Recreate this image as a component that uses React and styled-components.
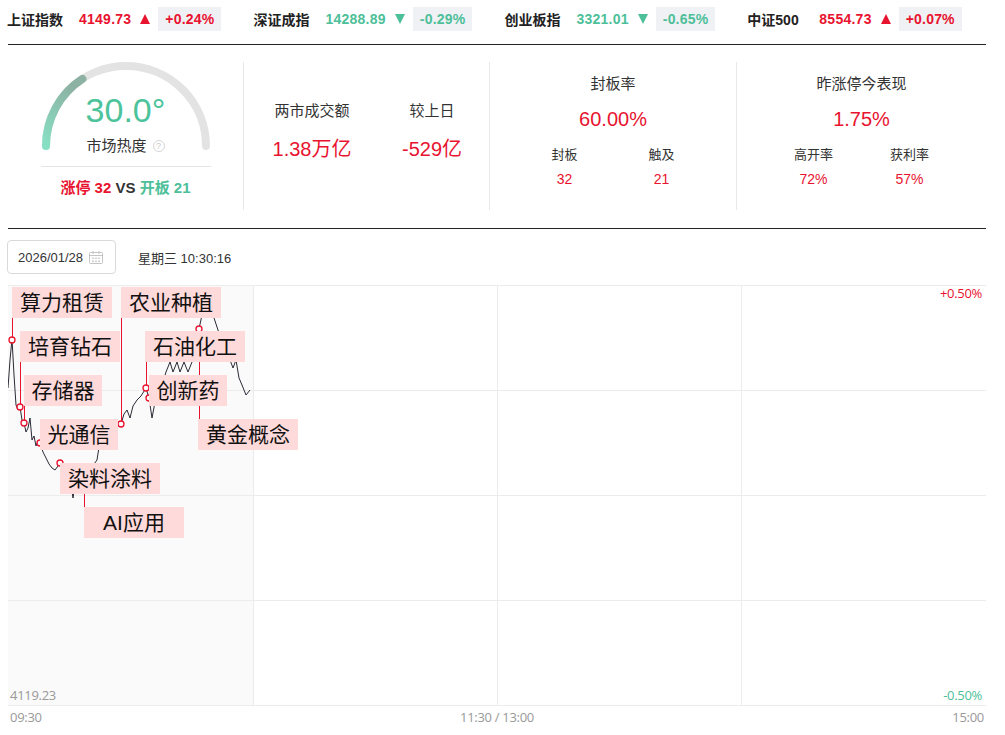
import React from "react";
import styled, { createGlobalStyle } from "styled-components";

const RED = "#e8132f";
const GREEN = "#4dbf99";

const Global = createGlobalStyle`
  html, body { margin: 0; padding: 0; background: #fff; }
  body { font-family: "Liberation Sans", "Noto Sans CJK SC", sans-serif; color: #222; }
  * { box-sizing: border-box; }
`;

const Page = styled.div`
  width: 1005px;
  height: 735px;
  overflow: hidden;
`;

/* ---------- ticker ---------- */
const TickerBar = styled.div`
  height: 38px;
  display: flex;
  align-items: center;
  gap: 32px;
  padding-left: 7px;
`;
const Ticker = styled.div`
  display: flex;
  align-items: center;
  font-size: 14px;
  font-weight: 700;
`;
const TickName = styled.span`
  width: 72px;
  color: #222;
`;
const TickNum = styled.span`
  color: ${(p) => (p.$up ? RED : GREEN)};
  letter-spacing: 0.25px;
`;
const Arrow = styled.span`
  width: 0;
  height: 0;
  margin: 0 8px 0 9px;
  border-left: 5.5px solid transparent;
  border-right: 5.5px solid transparent;
  ${(p) =>
    p.$up
      ? `border-bottom: 10px solid ${RED};`
      : `border-top: 10px solid ${GREEN};`}
`;
const Badge = styled.span`
  height: 24px;
  line-height: 24px;
  padding: 0 7px;
  background: #f0f1f5;
  letter-spacing: 0.2px;
  color: ${(p) => (p.$up ? RED : GREEN)};
`;

/* ---------- stats ---------- */
const Stats = styled.div`
  margin: 6px 0 0 8px;
  width: 978px;
  height: 185px;
  border-top: 1px solid #222;
  border-bottom: 1px solid #222;
  display: grid;
  grid-template-columns: 235px 246px 247px 1fr;
  padding: 17px 0 18px;
`;
const Panel = styled.div`
  display: flex;
  flex-direction: column;
  align-items: center;
  border-left: ${(p) => (p.$first ? "none" : "1px solid #e8e8e8")};
  padding-top: ${(p) => p.$pt || 0}px;
`;
const GaugeWrap = styled.div`
  position: relative;
  width: 176px;
  height: 94px;
  display: flex;
  flex-direction: column;
  align-items: center;
  padding-top: 28px;
  svg { position: absolute; left: 0; top: 0; }
`;
const GaugeValue = styled.div`
  position: relative;
  font-size: 34px;
  line-height: 40px;
  color: #4cc39a;
  font-family: "Liberation Sans", sans-serif;
`;
const GaugeLabel = styled.div`
  position: relative;
  margin-top: 6px;
  font-size: 15px;
  line-height: 20px;
  color: #333;
  display: flex;
  align-items: center;
  gap: 6px;
`;
const Help = styled.span`
  width: 12px;
  height: 12px;
  border: 1px solid #d6d6d6;
  border-radius: 50%;
  font-size: 9px;
  line-height: 10px;
  text-align: center;
  color: #c8c8c8;
`;
const GaugeDivider = styled.div`
  width: 170px;
  margin-top: 10px;
  border-top: 1px solid #e5e5e5;
`;
const VsLine = styled.div`
  margin-top: 11px;
  font-size: 15px;
  line-height: 20px;
  font-weight: 700;
  color: #333;
`;
const Red = styled.span`color: ${RED};`;
const Green = styled.span`color: ${GREEN};`;

const TwoCols = styled.div`
  display: grid;
  grid-template-columns: ${(p) => p.$col}px ${(p) => p.$col}px;
  align-self: ${(p) => (p.$start ? "flex-start" : "center")};
  margin-left: ${(p) => p.$ml || 0}px;
  margin-top: ${(p) => p.$mt || 0}px;
  text-align: center;
`;
const Col = styled.div`
  display: flex;
  flex-direction: column;
  align-items: center;
`;
const StatLabel = styled.div`
  font-size: 15px;
  line-height: 20px;
  color: #333;
`;
const StatBig = styled.div`
  font-size: 20px;
  line-height: 26px;
  color: ${RED};
  margin-top: ${(p) => p.$mt || 0}px;
`;
const SubLabel = styled.div`
  font-size: 13px;
  line-height: 18px;
  color: #333;
`;
const SubValue = styled.div`
  font-size: 14px;
  line-height: 18px;
  color: ${RED};
  margin-top: 6px;
`;

/* ---------- date row ---------- */
const DateRow = styled.div`
  margin: 11px 0 0 7px;
  display: flex;
  align-items: center;
  gap: 22px;
`;
const DateBox = styled.div`
  width: 109px;
  height: 34px;
  border: 1px solid #d9d9d9;
  border-radius: 4px;
  display: flex;
  align-items: center;
  padding-left: 10px;
  gap: 6px;
  font-size: 13px;
  color: #333;
`;
const TimeText = styled.span`
  font-size: 13px;
  color: #333;
`;

/* ---------- chart ---------- */
const ChartArea = styled.div`
  position: relative;
  margin: 11px 0 0 8px;
  width: 978px;
  height: 421px;
  svg { position: absolute; left: 0; top: 0; }
`;
const Tag = styled.div`
  position: absolute;
  left: ${(p) => p.$x - 8}px;
  top: ${(p) => p.$y - 285}px;
  width: ${(p) => p.$w}px;
  height: 31px;
  line-height: 31px;
  background: #ffdada;
  color: #111;
  font-size: 21px;
  text-align: center;
  white-space: nowrap;
`;
const AxisText = styled.div`
  position: absolute;
  font-size: 13px;
  line-height: 16px;
  color: ${(p) => p.$c || "#999"};
  ${(p) => (p.$right ? "right: 4px;" : "left: 2px;")}
  top: ${(p) => p.$top}px;
  font-family: "Open Sans", "Liberation Sans", sans-serif;
  letter-spacing: -0.3px;
`;
const TimeAxis = styled.div`
  margin-left: 8px;
  width: 976px;
  height: 22px;
  display: flex;
  justify-content: space-between;
  align-items: center;
  font-size: 13px;
  color: #999;
  font-family: "Open Sans", "Liberation Sans", sans-serif;
  letter-spacing: -0.3px;
  padding-left: 2px;
`;

const tickers = [
  { name: "上证指数", num: "4149.73", pct: "+0.24%", up: true },
  { name: "深证成指", num: "14288.89", pct: "-0.29%", up: false },
  { name: "创业板指", num: "3321.01", pct: "-0.65%", up: false },
  { name: "中证500", num: "8554.73", pct: "+0.07%", up: true },
];

const line = [
  [8, 388], [10, 360], [12, 339], [14, 375], [16, 405], [18, 410], [20, 407], [22, 420],
  [24, 423], [26, 432], [28, 428], [30, 418], [32, 440], [34, 436], [36, 446], [38, 441],
  [40, 443], [43, 452], [46, 458], [49, 464], [52, 468], [55, 470], [58, 466], [60, 463],
  [62, 466], [65, 472], [68, 478], [71, 485], [73, 498], [75, 485], [78, 474], [82, 470],
  [86, 468], [90, 466], [94, 464], [97, 460], [99, 447], [102, 440], [106, 434], [110, 428],
  [114, 425], [118, 426], [121, 424], [124, 414], [127, 410], [130, 418], [133, 406],
  [137, 400], [141, 396], [146, 388], [149, 398], [152, 418], [155, 402], [158, 392],
  [162, 386], [166, 372], [170, 362], [173, 372], [177, 362], [180, 372], [184, 362],
  [188, 372], [192, 362], [196, 345], [199, 329], [202, 315], [206, 300], [210, 312],
  [214, 318], [218, 330], [222, 345], [226, 352], [230, 360], [233, 368], [236, 360],
  [239, 378], [242, 385], [246, 395], [250, 390],
];
const markers = [
  [12, 340], [20, 407], [24, 423], [40, 443], [60, 463], [86, 468],
  [121, 424], [146, 388], [149, 398], [199, 329],
];
const leaders = [
  [12, 317, 340], [20, 362, 407], [24, 405, 423], [84, 468, 507],
  [121, 317, 424], [146, 362, 388], [199, 329, 419],
];
const tags = [
  { t: "算力租赁", x: 12, y: 287, w: 100 },
  { t: "培育钻石", x: 20, y: 331, w: 100 },
  { t: "存储器", x: 24, y: 375, w: 78 },
  { t: "光通信", x: 40, y: 419, w: 78 },
  { t: "染料涂料", x: 60, y: 463, w: 100 },
  { t: "AI应用", x: 84, y: 507, w: 100 },
  { t: "农业种植", x: 121, y: 287, w: 100 },
  { t: "石油化工", x: 145, y: 331, w: 100 },
  { t: "创新药", x: 149, y: 375, w: 78 },
  { t: "黄金概念", x: 198, y: 419, w: 100 },
];

function Gauge() {
  const cx = 88, cy = 84, r = 80;
  const a = (123 * Math.PI) / 180;
  const ex = cx + r * Math.cos(a);
  const ey = cy - r * Math.sin(a);
  return (
    <svg width="176" height="96" viewBox="0 0 176 96">
      <defs>
        <linearGradient id="gg" x1="0" y1="1" x2="0.4" y2="0">
          <stop offset="0" stopColor="#86e0c4" />
          <stop offset="1" stopColor="#8db2a3" />
        </linearGradient>
      </defs>
      <path
        d={`M ${cx - r} ${cy} A ${r} ${r} 0 0 1 ${cx + r} ${cy}`}
        fill="none"
        stroke="#e3e3e3"
        strokeWidth="8"
        strokeLinecap="round"
      />
      <path
        d={`M ${cx - r} ${cy} A ${r} ${r} 0 0 1 ${ex} ${ey}`}
        fill="none"
        stroke="url(#gg)"
        strokeWidth="8"
        strokeLinecap="round"
      />
    </svg>
  );
}

function CalendarIcon() {
  return (
    <svg width="14" height="13" viewBox="0 0 14 13">
      <rect x="0.5" y="1.5" width="13" height="11" rx="1" fill="none" stroke="#c4c4c4" />
      <line x1="0.5" y1="4.5" x2="13.5" y2="4.5" stroke="#c4c4c4" />
      <line x1="4" y1="0" x2="4" y2="3" stroke="#c4c4c4" />
      <line x1="10" y1="0" x2="10" y2="3" stroke="#c4c4c4" />
      {[3, 6, 9].map((x) =>
        [6.5, 9.5].map((y) => (
          <rect key={x + "-" + y} x={x} y={y} width="2" height="1.5" fill="#d0d0d0" />
        ))
      )}
    </svg>
  );
}

function Chart() {
  const d = "M" + line.map((p) => p.join(" ")).join(" L");
  return (
    <ChartArea>
      <svg width="978" height="421" viewBox="8 285 978 421">
        <rect x="8" y="285" width="245.5" height="420" fill="#fafafa" />
        {[285.5, 390.5, 495.5, 600.5, 705.5].map((y) => (
          <line key={y} x1="8" x2="986" y1={y} y2={y} stroke="#ececec" />
        ))}
        {[253.5, 497.5, 741.5].map((x) => (
          <line key={x} x1={x} x2={x} y1="285" y2="705" stroke="#ececec" />
        ))}
        <path d={d} fill="none" stroke="#2a2a36" strokeWidth="1" strokeLinejoin="round" />
        {leaders.map(([x, y1, y2]) => (
          <line key={x} x1={x + 0.5} x2={x + 0.5} y1={y1} y2={y2} stroke={RED} strokeWidth="1" />
        ))}
        {markers.map(([x, y]) => (
          <circle key={x + "," + y} cx={x} cy={y} r="3" fill="#fff" stroke={RED} strokeWidth="1.3" />
        ))}
      </svg>
      {tags.map((t) => (
        <Tag key={t.t} $x={t.x} $y={t.y} $w={t.w}>
          {t.t}
        </Tag>
      ))}
      <AxisText $right $top={0} $c={RED}>+0.50%</AxisText>
      <AxisText $right $top={402} $c={GREEN}>-0.50%</AxisText>
      <AxisText $top={402}>4119.23</AxisText>
    </ChartArea>
  );
}

export default function App() {
  return (
    <Page>
      <Global />
      <TickerBar>
        {tickers.map((t) => (
          <Ticker key={t.name}>
            <TickName>{t.name}</TickName>
            <TickNum $up={t.up}>{t.num}</TickNum>
            <Arrow $up={t.up} />
            <Badge $up={t.up}>{t.pct}</Badge>
          </Ticker>
        ))}
      </TickerBar>

      <Stats>
        <Panel $first>
          <GaugeWrap>
            <Gauge />
            <GaugeValue>30.0°</GaugeValue>
            <GaugeLabel>
              市场热度<Help>?</Help>
            </GaugeLabel>
          </GaugeWrap>
          <GaugeDivider />
          <VsLine>
            <Red>涨停 32</Red> VS <Green>开板 21</Green>
          </VsLine>
        </Panel>

        <Panel $pt={39}>
          <TwoCols $col={120} $start $ml={8}>
            <Col>
              <StatLabel>两市成交额</StatLabel>
              <StatBig $mt={15}>1.38万亿</StatBig>
            </Col>
            <Col>
              <StatLabel>较上日</StatLabel>
              <StatBig $mt={15}>-529亿</StatBig>
            </Col>
          </TwoCols>
        </Panel>

        <Panel $pt={12}>
          <StatLabel>封板率</StatLabel>
          <StatBig $mt={12}>60.00%</StatBig>
          <TwoCols $col={97} $mt={14}>
            <Col>
              <SubLabel>封板</SubLabel>
              <SubValue>32</SubValue>
            </Col>
            <Col>
              <SubLabel>触及</SubLabel>
              <SubValue>21</SubValue>
            </Col>
          </TwoCols>
        </Panel>

        <Panel $pt={12}>
          <StatLabel>昨涨停今表现</StatLabel>
          <StatBig $mt={12}>1.75%</StatBig>
          <TwoCols $col={96} $mt={14}>
            <Col>
              <SubLabel>高开率</SubLabel>
              <SubValue>72%</SubValue>
            </Col>
            <Col>
              <SubLabel>获利率</SubLabel>
              <SubValue>57%</SubValue>
            </Col>
          </TwoCols>
        </Panel>
      </Stats>

      <DateRow>
        <DateBox>
          2026/01/28
          <CalendarIcon />
        </DateBox>
        <TimeText>星期三 10:30:16</TimeText>
      </DateRow>

      <Chart />

      <TimeAxis>
        <span>09:30</span>
        <span>11:30 / 13:00</span>
        <span>15:00</span>
      </TimeAxis>
    </Page>
  );
}
